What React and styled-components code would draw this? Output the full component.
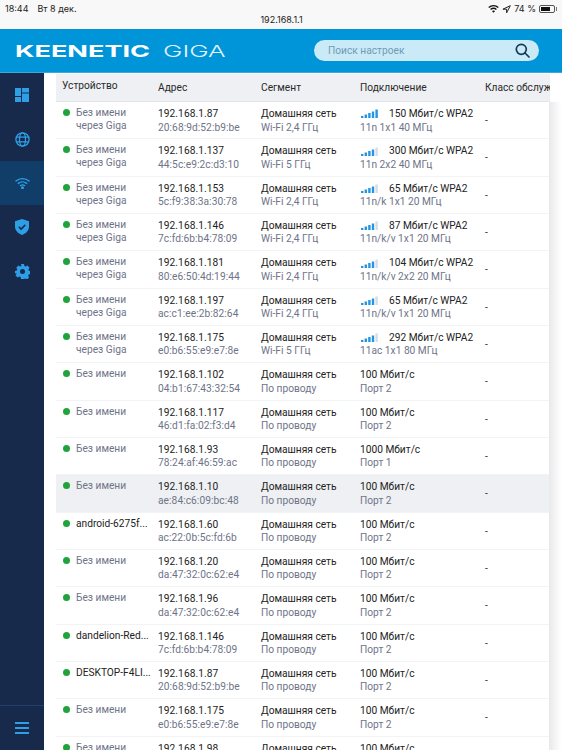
import React from "react";
import styled, { createGlobalStyle } from "styled-components";

const Global = createGlobalStyle`
  html, body { margin: 0; padding: 0; width: 562px; height: 750px; overflow: hidden; background: #fff; }
  #root { width: 562px; height: 750px; overflow: hidden; }
  * { box-sizing: border-box; }
`;

const Page = styled.div`
  width: 562px; height: 750px; display: flex; flex-direction: column;
  font-family: Roboto, "Liberation Sans", sans-serif; overflow: hidden;
`;
const StatusBar = styled.div`
  height: 29px; flex: none; background: #f8f8f8; position: relative;
  display: flex; justify-content: space-between; padding: 3px 7px 0 5px;
  font-size: 9.5px; color: #222; font-family: Inter, Roboto, sans-serif;
`;
const StatusLeft = styled.div`display: flex; gap: 9px; line-height: 12px; font-size: 9px;`;
const StatusRight = styled.div`display: flex; align-items: flex-start; gap: 3px; line-height: 12px; font-size: 9px;`;
const Url = styled.div`
  position: absolute; left: 0; right: 0; top: 14px; text-align: center;
  font-size: 9px; line-height: 12px; color: #222; padding-left: 1px;
`;
const Battery = styled.span`
  width: 16px; height: 8px; border: 1px solid #555; border-radius: 2px; margin-top: 2px; padding: 1px;
  display: block; position: relative;
  &::before { content: ""; display: block; width: 74%; height: 100%; background: #111; }
  &::after { content: ""; position: absolute; right: -3px; top: 1px; width: 1px; height: 4px; background: #777; }
`;
const Header = styled.header`
  height: 44px; flex: none; background: #0095d8; border-bottom: 1px solid #3aa9e0;
  display: flex; align-items: center; padding: 0 23px 0 15px; justify-content: space-between;
`;
const Logo = styled.div`display: flex; color: #fff; height: 20px; align-items: center;`;
const Brand = styled.span`
  font-family: Inter, sans-serif; font-weight: 700; font-size: 16.5px; display: block;
  transform: scaleX(1.64); transform-origin: left center; width: 148px; white-space: nowrap;
`;
const Model = styled.span`
  font-family: Inter, sans-serif; font-weight: 300; font-size: 16.5px; display: block;
  color: #e2f4fc; transform: scaleX(1.58); transform-origin: left center; white-space: nowrap; width: 66px;
`;
const Search = styled.div`
  width: 225px; height: 21px; border-radius: 11px; background: #cbeaf8;
  display: flex; align-items: center; justify-content: space-between; padding: 0 9px 0 14px;
  font-size: 10.2px; color: #6b9cb3;
`;
const Body = styled.div`flex: 1; display: flex; min-height: 0;`;
const Side = styled.nav`
  width: 44px; flex: none; background: #172a4c; display: flex; flex-direction: column; color: #2e9fe6;
`;
const SideItem = styled.div`
  height: 44px; flex: none; display: flex; align-items: center; justify-content: center;
  background: ${p => (p.$active ? "#113e69" : "transparent")};
`;
const SideFoot = styled.div`
  margin-top: auto; height: 45px; border-top: 1px solid #23406a;
  display: flex; align-items: center; justify-content: center; padding-bottom: 1px;
`;
const Main = styled.main`
  flex: 1; min-width: 0; overflow: hidden; padding: 1px 0 0 12px; position: relative;
`;
const Fade = styled.div`
  position: absolute; top: 29px; right: 0; bottom: 0; width: 13px;
  background: linear-gradient(to right, #e9e9eb, #f7f7f8 60%, #fff);
`;
const Table = styled.div`width: 494px; overflow: hidden;`;
const HeadRow = styled.div`
  height: 28px; background: #eef0f3; border-bottom: 1px solid #e3e5e9;
  display: grid; grid-template-columns: 102px 103px 99px 125px 65px;
  font-size: 10.2px; color: #2a2a2a; line-height: 12px;
`;
const HeadCell = styled.div`
  padding: ${p => (p.$first ? "6px 0 0 6px" : "8px 0 0 0")}; white-space: nowrap; overflow: hidden;
`;
const Row = styled.div`
  height: 37.33px; border-bottom: 1px solid #f2f3f5;
  display: grid; grid-template-columns: 102px 103px 99px 125px 65px;
  background: ${p => (p.$hl ? "#eef0f3" : "#fff")};
`;
const DeviceCell = styled.div`display: flex; padding: 4px 0 0 7px; gap: 6px;`;
const Dot = styled.span`width: 7px; height: 7px; border-radius: 50%; background: #1fa43c; flex: none; margin-top: 3px;`;
const Name = styled.div`
  font-size: 10.2px; line-height: 13px; color: ${p => (p.$named ? "#222" : "#6e7488")};
  white-space: pre-line;
`;
const Cell = styled.div`padding-top: 5px; line-height: 13.5px; white-space: nowrap;`;
const Primary = styled.div`font-size: 10.2px; color: #222; letter-spacing: ${p => (p.$ip ? ".06px" : "0")};`;
const Secondary = styled.div`font-size: 10.2px; color: #6e7488; letter-spacing: ${p => (p.$mac ? ".06px" : "0")};`;
const ConnLine = styled.div`display: flex; align-items: center; gap: ${p => (p.$bars ? "11px" : "0")}; font-size: 10.2px; color: #222; height: 13.5px;`;
const Dash = styled.div`font-size: 10.2px; color: #333; padding-top: 12px; line-height: 13px;`;

const Bars = ({ level }) => (
  <svg width="18" height="9" viewBox="0 0 18 9">
    {[0, 1, 2, 3, 4].map(i => {
      const h = [2, 3.5, 5, 6.5, 8.5][i];
      return <rect key={i} x={1 + i * 3.6} y={9 - h} width="2.4" height={h} fill={i < level ? "#2295e4" : "#d8dbe0"} />;
    })}
  </svg>
);

const DashIcon = () => (
  <svg width="14" height="14" viewBox="0 0 14 14" fill="currentColor">
    <rect x="0" y="0" width="6" height="8" /><rect x="7" y="0" width="7" height="4.5" />
    <rect x="0" y="9" width="6" height="5" /><rect x="7" y="5.5" width="7" height="8.5" />
  </svg>
);
const GlobeIcon = () => (
  <svg width="15" height="15" viewBox="0 0 15 15" fill="none" stroke="currentColor" strokeWidth="1.3">
    <circle cx="7.5" cy="7.5" r="6.6" /><ellipse cx="7.5" cy="7.5" rx="3" ry="6.6" />
    <path d="M1.2 5.2h12.6M1.2 9.8h12.6" />
  </svg>
);
const WifiIcon = () => (
  <svg width="15" height="12" viewBox="0 0 15 12" fill="none" stroke="currentColor" strokeWidth="1.4" strokeLinecap="round">
    <path d="M1 4c3.6-3.2 9.4-3.2 13 0M3.3 6.4c2.4-2 6-2 8.4 0M5.5 8.6c1.2-.9 2.8-.9 4 0" />
    <circle cx="7.5" cy="10.7" r=".8" fill="currentColor" />
  </svg>
);
const ShieldIcon = () => (
  <svg width="14" height="16" viewBox="0 0 14 16">
    <path d="M7 0l7 2.3v5.2c0 3.9-2.8 6.9-7 8.5-4.2-1.6-7-4.6-7-8.5V2.3z" fill="currentColor" />
    <path d="M3.8 7.8l2.3 2.3 4.2-4.2" fill="none" stroke="#172a4c" strokeWidth="1.5" />
  </svg>
);
const GearIcon = () => (
  <svg width="15" height="15" viewBox="0 0 15 15">
    <path fill="currentColor" fillRule="evenodd" d="M6 0h3l.4 2 1.3.6L12.5 1.6l2 2.2-1.1 1.7.5 1.2 1.6.4v3l-1.9.4-.5 1.2 1 1.7-2.1 2-1.7-1-1.3.5L9 15H6l-.4-1.9-1.3-.5-1.7 1-2.1-2 1-1.7-.5-1.2L-.1 10V7l1.9-.4.5-1.2-1-1.6 2-2.2 1.8 1L6.4 2zM7.5 5a2.5 2.5 0 100 5 2.5 2.5 0 000-5z" />
  </svg>
);
const MenuIcon = () => (
  <svg width="14" height="12" viewBox="0 0 14 12" fill="currentColor">
    <rect width="14" height="2" /><rect y="5" width="14" height="2" /><rect y="10" width="14" height="2" />
  </svg>
);

const wifi = (ip, mac, band, level, speed, mode) => ({ name: "Без имени\nчерез Giga", ip, mac, seg: band, level, speed, mode });
const wired = (name, ip, mac, speed, port, named) => ({ name, ip, mac, seg: "По проводу", speed, mode: port, named });
const B24 = "Wi-Fi 2,4 ГГц", B5 = "Wi-Fi 5 ГГц", NN = "Без имени";
const rows = [
  wifi("192.168.1.87", "20:68:9d:52:b9:be", B24, 5, "150 Мбит/с WPA2", "11n 1x1 40 МГц"),
  wifi("192.168.1.137", "44:5c:e9:2c:d3:10", B5, 4, "300 Мбит/с WPA2", "11n 2x2 40 МГц"),
  wifi("192.168.1.153", "5c:f9:38:3a:30:78", B24, 4, "65 Мбит/с WPA2", "11n/k 1x1 20 МГц"),
  wifi("192.168.1.146", "7c:fd:6b:b4:78:09", B24, 4, "87 Мбит/с WPA2", "11n/k/v 1x1 20 МГц"),
  wifi("192.168.1.181", "80:e6:50:4d:19:44", B24, 4, "104 Мбит/с WPA2", "11n/k/v 2x2 20 МГц"),
  wifi("192.168.1.197", "ac:c1:ee:2b:82:64", B24, 4, "65 Мбит/с WPA2", "11n/k/v 1x1 20 МГц"),
  wifi("192.168.1.175", "e0:b6:55:e9:e7:8e", B5, 4, "292 Мбит/с WPA2", "11ac 1x1 80 МГц"),
  wired(NN, "192.168.1.102", "04:b1:67:43:32:54", "100 Мбит/с", "Порт 2"),
  wired(NN, "192.168.1.117", "46:d1:fa:02:f3:d4", "100 Мбит/с", "Порт 2"),
  wired(NN, "192.168.1.93", "78:24:af:46:59:ac", "1000 Мбит/с", "Порт 1"),
  { ...wired(NN, "192.168.1.10", "ae:84:c6:09:bc:48", "100 Мбит/с", "Порт 2"), hl: true },
  wired("android-6275f...", "192.168.1.60", "ac:22:0b:5c:fd:6b", "100 Мбит/с", "Порт 2", true),
  wired(NN, "192.168.1.20", "da:47:32:0c:62:e4", "100 Мбит/с", "Порт 2"),
  wired(NN, "192.168.1.96", "da:47:32:0c:62:e4", "100 Мбит/с", "Порт 2"),
  wired("dandelion-Red...", "192.168.1.146", "7c:fd:6b:b4:78:09", "100 Мбит/с", "Порт 2", true),
  wired("DESKTOP-F4LI...", "192.168.1.87", "20:68:9d:52:b9:be", "100 Мбит/с", "Порт 2", true),
  wired(NN, "192.168.1.175", "e0:b6:55:e9:e7:8e", "100 Мбит/с", "Порт 2"),
  wired(NN, "192.168.1.98", "e0:b6:55:e9:e7:8e", "100 Мбит/с", "Порт 2"),
];

export default function App() {
  return (
    <Page>
      <Global />
      <StatusBar>
        <StatusLeft><span>18:44</span><span>Вт 8 дек.</span></StatusLeft>
        <Url>192.168.1.1</Url>
        <StatusRight>
          <svg width="11" height="10" viewBox="0 0 12 10" style={{ marginTop: 1 }} fill="none" stroke="#111" strokeWidth="1.5">
            <path d="M.8 3.4c3-2.7 7.4-2.7 10.4 0M2.8 5.5c1.8-1.5 4.6-1.5 6.4 0" />
            <path d="M4.3 7.3c1-.8 2.4-.8 3.4 0L6 9.2z" fill="#111" stroke="none" />
          </svg>
          <svg width="9" height="9" viewBox="0 0 9 9" style={{ marginTop: 2 }} fill="none" stroke="#222" strokeWidth="1">
            <path d="M8.3.7L.9 4.2h3.7v3.6z" />
          </svg>
          <span>74 %</span>
          <Battery />
        </StatusRight>
      </StatusBar>
      <Header>
        <Logo><Brand>KEENETIC</Brand><Model>GIGA</Model></Logo>
        <Search>
          <span>Поиск настроек</span>
          <svg width="15" height="15" viewBox="0 0 15 15" fill="none" stroke="#123a55" strokeWidth="1.7" strokeLinecap="round">
            <circle cx="6.3" cy="6.3" r="5" /><path d="M10 10l4 4" />
          </svg>
        </Search>
      </Header>
      <Body>
        <Side>
          <SideItem><DashIcon /></SideItem>
          <SideItem><GlobeIcon /></SideItem>
          <SideItem $active><WifiIcon /></SideItem>
          <SideItem><ShieldIcon /></SideItem>
          <SideItem><GearIcon /></SideItem>
          <SideFoot><MenuIcon /></SideFoot>
        </Side>
        <Main>
          <Table>
            <HeadRow>
              <HeadCell $first>Устройство</HeadCell>
              <HeadCell>Адрес</HeadCell>
              <HeadCell>Сегмент</HeadCell>
              <HeadCell>Подключение</HeadCell>
              <HeadCell>Класс обслуж</HeadCell>
            </HeadRow>
            {rows.map((r, i) => (
              <Row key={i} $hl={r.hl}>
                <DeviceCell><Dot /><Name $named={r.named}>{r.name}</Name></DeviceCell>
                <Cell><Primary $ip>{r.ip}</Primary><Secondary $mac>{r.mac}</Secondary></Cell>
                <Cell><Primary>Домашняя сеть</Primary><Secondary>{r.seg}</Secondary></Cell>
                <Cell>
                  <ConnLine $bars={!!r.level}>{r.level ? <Bars level={r.level} /> : null}<span>{r.speed}</span></ConnLine>
                  <Secondary>{r.mode}</Secondary>
                </Cell>
                <Dash>-</Dash>
              </Row>
            ))}
          </Table>
          <Fade />
        </Main>
      </Body>
    </Page>
  );
}
